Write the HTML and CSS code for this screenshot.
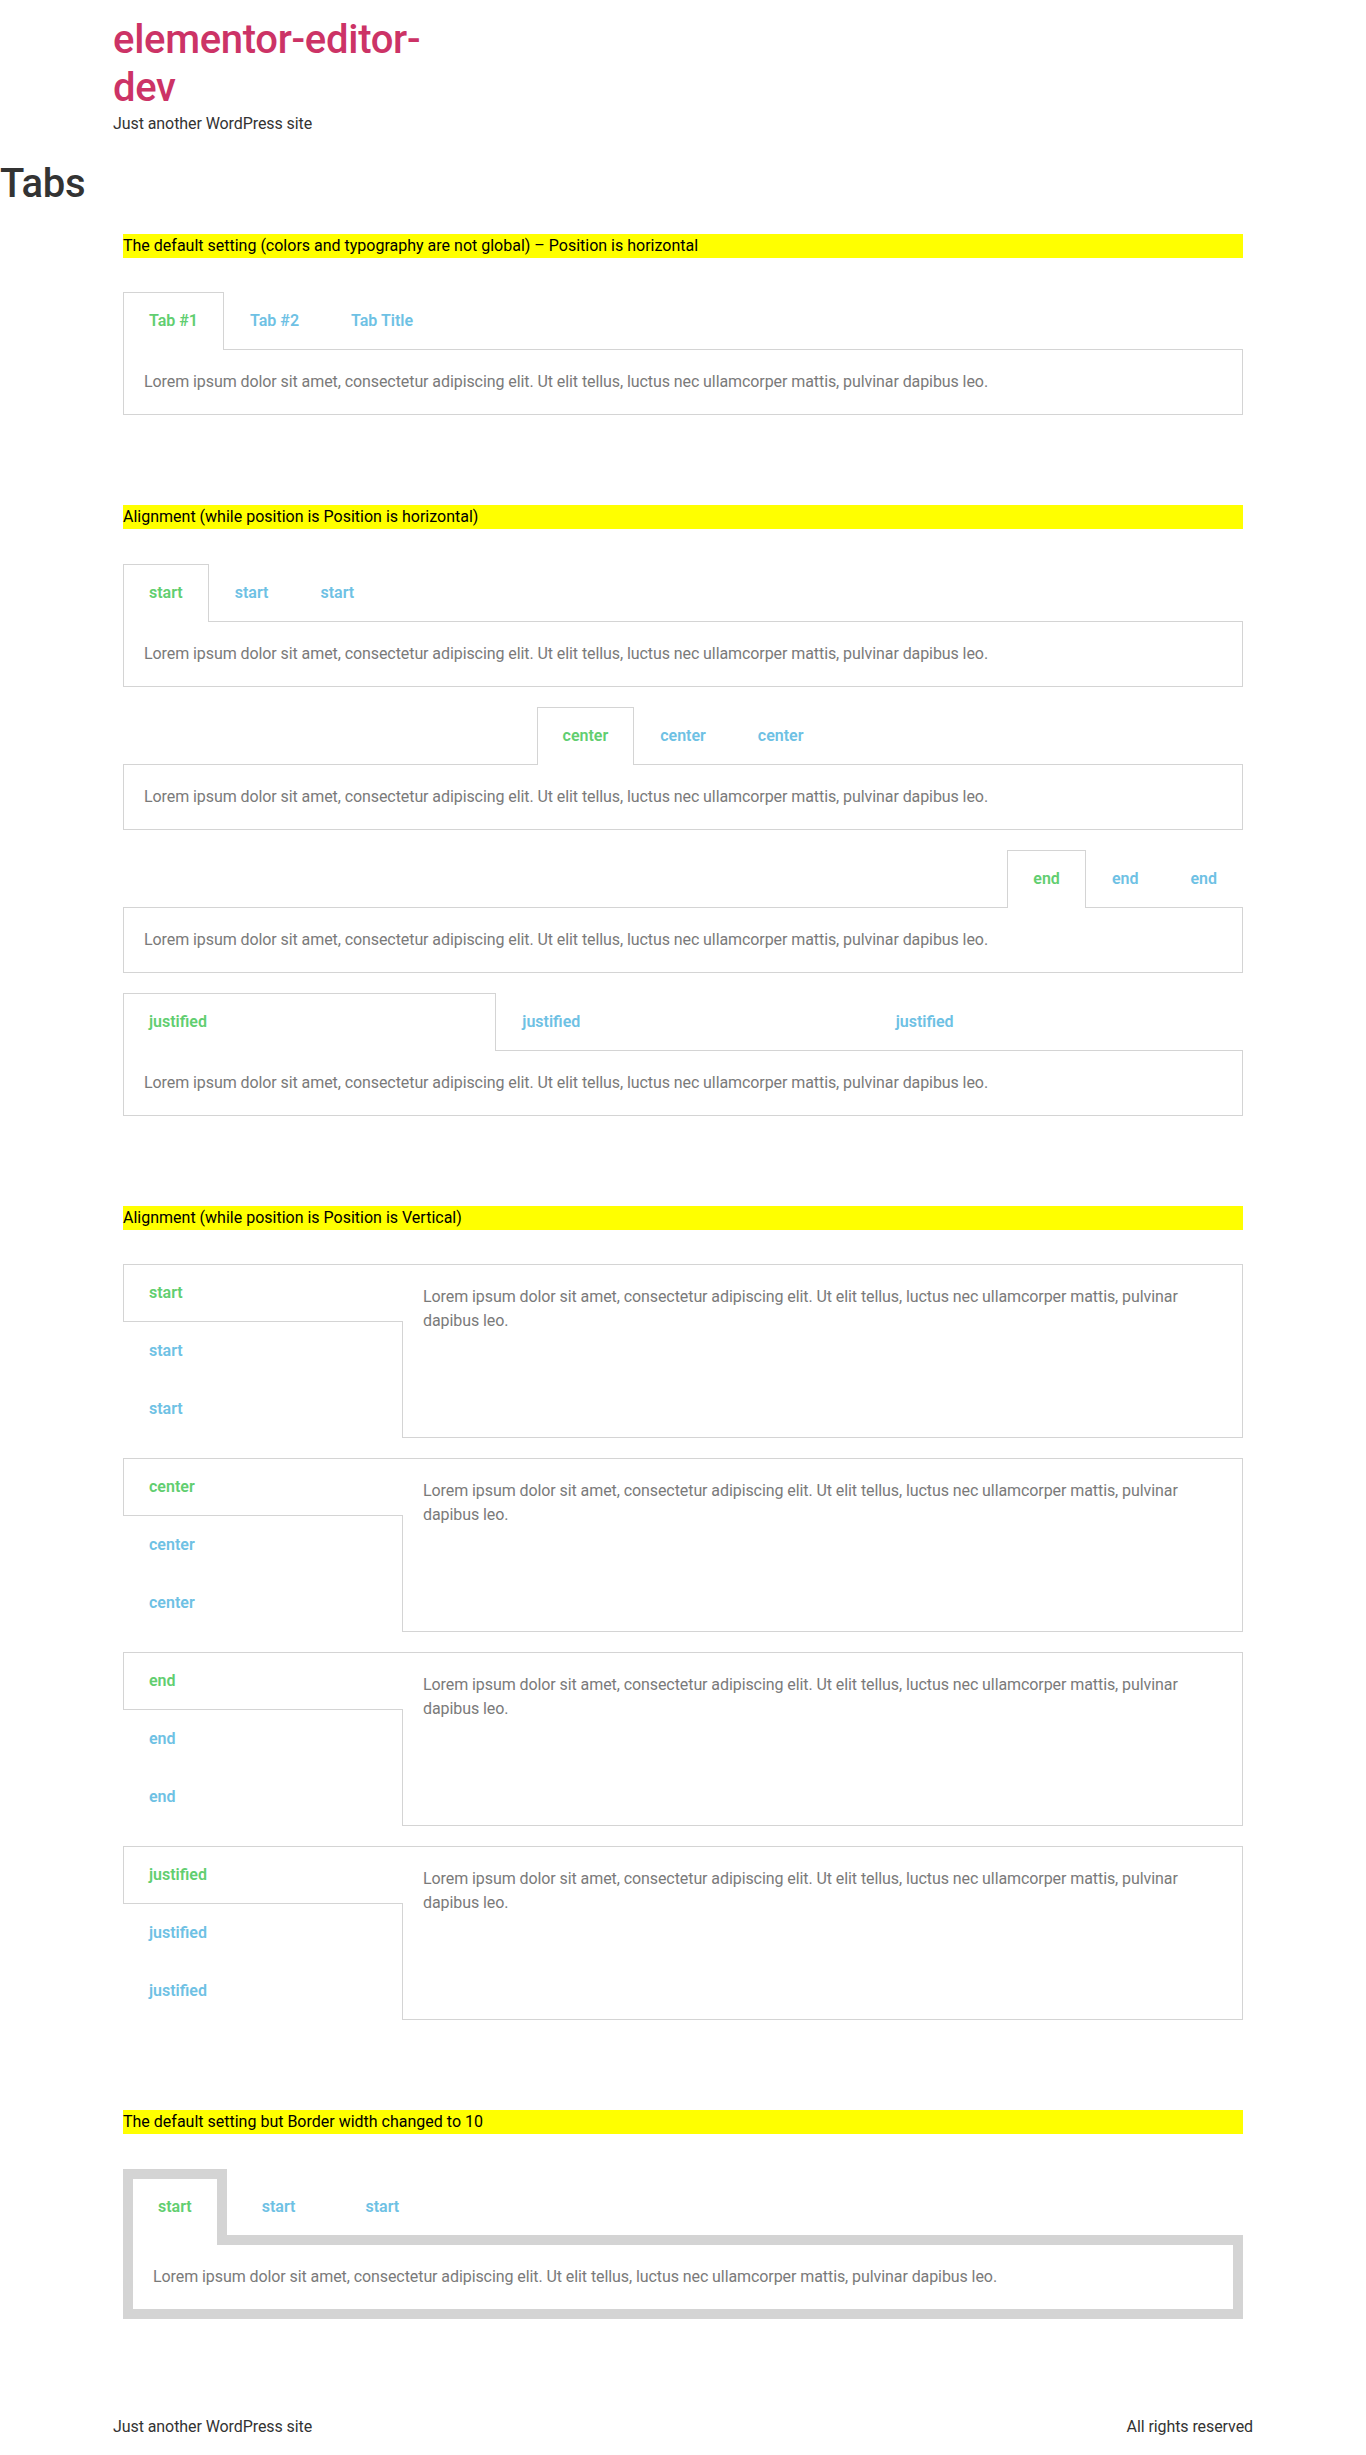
FILE: index.html
```html
<!DOCTYPE html>
<html lang="en">
<head>
<meta charset="utf-8">
<title>Tabs – elementor-editor-dev</title>
<link rel="stylesheet" href="styles.css">
</head>
<body>
<header class="site-header">
  <div class="site-branding">
    <h1 class="site-title"><a href="#">elementor-editor-dev</a></h1>
    <p class="site-description">Just another WordPress site</p>
  </div>
</header>

<main class="site-main">
  <h1 class="entry-title">Tabs</h1>

  <section class="el-section">
    <div class="el-column">
      <div class="widget"><p class="note">The default setting (colors and typography are not global) – Position is horizontal</p></div>
      <div class="widget tabs tabs-h">
        <div class="tabs-row">
          <div class="tab active">Tab #1</div>
          <div class="tab">Tab #2</div>
          <div class="tab">Tab Title</div>
        </div>
        <div class="tab-content">Lorem ipsum dolor sit amet, consectetur adipiscing elit. Ut elit tellus, luctus nec ullamcorper mattis, pulvinar dapibus leo.</div>
      </div>
    </div>
  </section>

  <section class="el-section">
    <div class="el-column">
      <div class="widget"><p class="note">Alignment (while position is Position is horizontal)</p></div>
      <div class="widget tabs tabs-h">
        <div class="tabs-row">
          <div class="tab active">start</div>
          <div class="tab">start</div>
          <div class="tab">start</div>
        </div>
        <div class="tab-content">Lorem ipsum dolor sit amet, consectetur adipiscing elit. Ut elit tellus, luctus nec ullamcorper mattis, pulvinar dapibus leo.</div>
      </div>
      <div class="widget tabs tabs-h">
        <div class="tabs-row align-center">
          <div class="tab active">center</div>
          <div class="tab">center</div>
          <div class="tab">center</div>
        </div>
        <div class="tab-content">Lorem ipsum dolor sit amet, consectetur adipiscing elit. Ut elit tellus, luctus nec ullamcorper mattis, pulvinar dapibus leo.</div>
      </div>
      <div class="widget tabs tabs-h">
        <div class="tabs-row align-end">
          <div class="tab active">end</div>
          <div class="tab">end</div>
          <div class="tab">end</div>
        </div>
        <div class="tab-content">Lorem ipsum dolor sit amet, consectetur adipiscing elit. Ut elit tellus, luctus nec ullamcorper mattis, pulvinar dapibus leo.</div>
      </div>
      <div class="widget tabs tabs-h">
        <div class="tabs-row align-justify">
          <div class="tab active">justified</div>
          <div class="tab">justified</div>
          <div class="tab">justified</div>
        </div>
        <div class="tab-content">Lorem ipsum dolor sit amet, consectetur adipiscing elit. Ut elit tellus, luctus nec ullamcorper mattis, pulvinar dapibus leo.</div>
      </div>
    </div>
  </section>

  <section class="el-section">
    <div class="el-column">
      <div class="widget"><p class="note">Alignment (while position is Position is Vertical)</p></div>
      <div class="widget tabs tabs-v">
        <div class="tabs-col">
          <div class="tab active">start</div>
          <div class="tab">start</div>
          <div class="tab">start</div>
        </div>
        <div class="tab-content">Lorem ipsum dolor sit amet, consectetur adipiscing elit. Ut elit tellus, luctus nec ullamcorper mattis, pulvinar dapibus leo.</div>
      </div>
      <div class="widget tabs tabs-v">
        <div class="tabs-col">
          <div class="tab active">center</div>
          <div class="tab">center</div>
          <div class="tab">center</div>
        </div>
        <div class="tab-content">Lorem ipsum dolor sit amet, consectetur adipiscing elit. Ut elit tellus, luctus nec ullamcorper mattis, pulvinar dapibus leo.</div>
      </div>
      <div class="widget tabs tabs-v">
        <div class="tabs-col">
          <div class="tab active">end</div>
          <div class="tab">end</div>
          <div class="tab">end</div>
        </div>
        <div class="tab-content">Lorem ipsum dolor sit amet, consectetur adipiscing elit. Ut elit tellus, luctus nec ullamcorper mattis, pulvinar dapibus leo.</div>
      </div>
      <div class="widget tabs tabs-v">
        <div class="tabs-col">
          <div class="tab active">justified</div>
          <div class="tab">justified</div>
          <div class="tab">justified</div>
        </div>
        <div class="tab-content">Lorem ipsum dolor sit amet, consectetur adipiscing elit. Ut elit tellus, luctus nec ullamcorper mattis, pulvinar dapibus leo.</div>
      </div>
    </div>
  </section>

  <section class="el-section">
    <div class="el-column">
      <div class="widget"><p class="note">The default setting but Border width changed to 10</p></div>
      <div class="widget tabs tabs-h thick">
        <div class="tabs-row">
          <div class="tab active">start</div>
          <div class="tab">start</div>
          <div class="tab">start</div>
        </div>
        <div class="tab-content">Lorem ipsum dolor sit amet, consectetur adipiscing elit. Ut elit tellus, luctus nec ullamcorper mattis, pulvinar dapibus leo.</div>
      </div>
    </div>
  </section>
</main>

<footer class="site-footer">
  <p class="site-description">Just another WordPress site</p>
  <p class="copyright">All rights reserved</p>
</footer>
</body>
</html>
```

FILE: styles.css
```css
html, body {
  margin: 0;
  padding: 0;
}

body {
  font-family: Roboto, "Liberation Sans", sans-serif;
  font-size: 16px;
  line-height: 1.5;
  letter-spacing: -0.08px;
  color: #333333;
  background: #ffffff;
}

/* Header */
.site-header {
  max-width: 1140px;
  margin: 0 auto;
  padding: 16px 0;
}

.site-branding {
  max-width: 330px;
}

.site-title {
  margin: 0;
  font-size: 40px;
  line-height: 1.2;
  font-weight: 500;
  letter-spacing: -0.3px;
}

.site-title a {
  color: #cc3366;
  text-decoration: none;
}

.site-description {
  margin: 0;
}

/* Page title */
.entry-title {
  margin: 8px 0 16px;
  font-size: 40px;
  line-height: 1.2;
  font-weight: 500;
  letter-spacing: -0.3px;
  color: #333333;
}

/* Elementor-like sections */
.el-section {
  max-width: 1140px;
  margin: 0 auto;
}

.el-section + .el-section {
  margin-top: 70px;
}

.el-column {
  padding: 10px;
  display: flex;
  flex-direction: column;
  gap: 20px;
}

.note {
  margin: 0 0 14.4px;
  background: #ffff00;
  color: #000000;
  line-height: 24px;
  letter-spacing: normal;
}

/* Tabs common */
.tab {
  padding: 20px 25px;
  font-size: 16px;
  line-height: 1;
  font-weight: 600;
  letter-spacing: normal;
  color: #6ec1e4;
  border: 1px solid transparent;
  cursor: pointer;
  white-space: nowrap;
}

.tab.active {
  color: #61ce70;
  background: #ffffff;
  border-color: #d4d4d4;
  position: relative;
  z-index: 1;
}

.tab-content {
  padding: 20px;
  color: #7a7a7a;
  border: 1px solid #d4d4d4;
  line-height: 1.5;
}

/* Horizontal tabs */
.tabs-h .tabs-row {
  display: flex;
  align-items: flex-start;
}

.tabs-h .tab {
  border-bottom: 0;
}

.tabs-h .tab.active {
  padding-bottom: 21px;
  margin-bottom: -1px;
}

.tabs-row.align-center {
  justify-content: center;
}

.tabs-row.align-end {
  justify-content: flex-end;
}

.tabs-row.align-justify .tab {
  flex: 1 1 0;
}

/* Thick border variant */
.tabs-h.thick .tab {
  border-width: 10px;
  border-bottom: 0;
}

.tabs-h.thick .tab.active {
  padding-bottom: 30px;
  margin-bottom: -10px;
}

.tabs-h.thick .tab-content {
  border-width: 10px;
}

/* Vertical tabs */
.tabs-v {
  display: flex;
  align-items: stretch;
}

.tabs-v .tabs-col {
  width: 25%;
  flex-shrink: 0;
  display: flex;
  flex-direction: column;
}

.tabs-v .tab.active {
  border-right: 0;
}

.tabs-v .tab-content {
  flex: 1 1 auto;
  margin-left: -1px;
}

/* Footer */
.site-footer {
  max-width: 1140px;
  margin: 70px auto 0;
  padding: 16px 0;
  display: flex;
  justify-content: space-between;
  align-items: center;
}

.site-footer p {
  margin: 0;
}
```
